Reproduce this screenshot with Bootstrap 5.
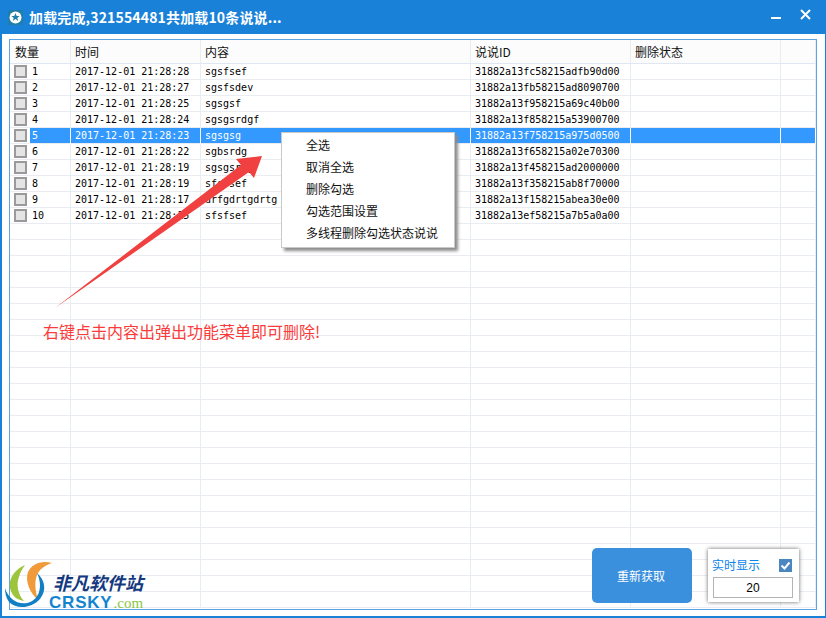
<!DOCTYPE html>
<html lang="zh-CN">
  <head>
    <meta charset="UTF-8" />
    <title>说说管理</title>
    <link
      rel="stylesheet"
      href="https://cdn.jsdelivr.net/npm/bootstrap@5.3.0/dist/css/bootstrap.min.css"
    />
    <style>
      html,
      body {
        height: 618px;
        overflow: hidden;
        background: #fff;
      }

      body {
        font-family: "Noto Sans CJK SC", sans-serif;
        font-size: 12px;
        color: #111;
      }

      .app-window {
        width: 826px;
        height: 618px;
        border: 1px solid #1a81d9;
        border-width: 0 1px 2px 2px;
      }

      .title-bar {
        height: 34px;
        margin-left: -2px;
        margin-right: -1px;
        padding-left: 8px;
        background: #1a81d9;
        color: #fff;
      }

      .title-text {
        margin-left: 6px;
        font-size: 14px;
        font-weight: 700;
        letter-spacing: 0.15px;
        line-height: 34px;
      }

      .win-min {
        position: absolute;
        left: 771px;
        top: 17px;
        width: 10px;
        height: 2px;
        background: #fff;
      }

      .win-close {
        position: absolute;
        left: 800px;
        top: 9px;
      }

      .app-body {
        padding: 5px 8px 6px 7px;
      }

      .grid-box {
        height: 571px;
        border: 1px solid #5ba5e6;
        overflow: hidden;
      }

      .data-grid {
        width: 806px;
        table-layout: fixed;
        border-collapse: separate;
        border-spacing: 0;
      }

      .data-grid th {
        height: 24px;
        padding: 0 0 0 5px;
        font-weight: 400;
        background: #fcfcfc;
        border-right: 1px solid #e9edf2;
        border-bottom: 1px solid #dfe8f2;
      }

      .data-grid th + th {
        padding-left: 4px;
      }

      .data-grid td {
        height: 16px;
        padding: 0 0 0 4px;
        line-height: 15px;
        font-family: "DejaVu Sans Mono", monospace;
        font-size: 10px;
        color: #000;
        white-space: nowrap;
        border-right: 1px solid #e9edf2;
        border-bottom: 1px solid #e9edf2;
      }

      .data-grid td.num-cell {
        padding: 0;
      }

      .num-wrap {
        height: 15px;
      }

      .num-value {
        padding-left: 2px;
      }

      .row-check {
        width: 13px;
        height: 13px;
        margin: 1px 3px 0 4px;
        border: 2px solid #9a9a9a;
        background: #e4e4e4;
        flex: none;
      }

      .data-grid tr.row-picked td {
        color: #fff;
        background: #3399ff;
        border-right-color: #fff;
        border-bottom-color: #e9edf2;
      }

      .data-grid tr.row-picked td.num-cell {
        background: #fff;
      }

      .row-picked .num-value {
        color: #fff;
        background: #3399ff;
      }

      .arrow-layer {
        position: absolute;
        left: 0;
        top: 0;
        pointer-events: none;
      }

      .note-text {
        position: absolute;
        left: 43px;
        top: 320px;
        font-size: 16px;
        line-height: 22px;
        color: #fb3a3a;
      }

      .ctx-menu {
        position: absolute;
        left: 281px;
        top: 132px;
        width: 174px;
        height: 116px;
        padding-top: 1px;
        background: #fff;
        border: 1px solid #c8c8c8;
        box-shadow: 3px 3px 3px #8c8c8c;
      }

      .ctx-item {
        height: 22px;
        padding-left: 24px;
        line-height: 22px;
      }

      .reload-btn {
        position: absolute;
        left: 592px;
        top: 548px;
        width: 100px;
        height: 55px;
        padding: 0 2px 0 0;
        font-size: 12px;
        border-radius: 5px;
        border: 0;
        background: #3a90dc;
        color: #fff;
      }

      .live-box {
        position: absolute;
        left: 708px;
        top: 549px;
        width: 91px;
        height: 53px;
        padding: 5px 5px 0 4px;
        background: #fff;
        box-shadow: 0 0 4px #666;
      }

      .live-label {
        color: #0a84e8;
        line-height: 22px;
      }

      .live-check {
        width: 13px;
        height: 13px;
        margin-right: 2px;
        background: #4a86c0;
      }

      .live-input {
        height: 21px;
        margin: 1px 1px 0 1px;
        border: 1px solid #b4b4b4;
        font-family: "Liberation Sans", sans-serif;
        line-height: 20px;
        text-align: center;
        color: #000;
      }

      .site-logo {
        position: absolute;
        left: 5px;
        top: 560px;
        width: 145px;
        height: 52px;
      }

      .site-name {
        position: absolute;
        left: 48px;
        top: 10px;
        font-size: 18px;
        line-height: 24px;
        font-weight: 700;
        font-style: italic;
        color: #14397e;
        white-space: nowrap;
      }

      .site-domain {
        position: absolute;
        left: 44px;
        top: 33px;
        line-height: 20px;
        white-space: nowrap;
        font-family: "Liberation Sans", sans-serif;
        font-size: 17px;
        font-weight: 700;
        letter-spacing: 0.8px;
        color: #1284cf;
      }

      .site-domain span {
        margin-left: 1px;
        font-family: "Liberation Serif", serif;
        font-size: 15px;
        font-weight: 400;
        letter-spacing: 0;
        color: #8cc63f;
      }
    </style>
  </head>
  <body class="position-relative">
    <div class="app-window d-flex flex-column">
      <div class="title-bar d-flex align-items-center">
        <svg width="15" height="15" viewBox="0 0 15 15">
          <rect width="15" height="15" rx="2" fill="#1f7fa8" />
          <circle cx="7.5" cy="7.5" r="6" fill="#fff" />
          <path d="M7.5 3l1.2 3h3l-2.4 1.9.9 3-2.7-1.8-2.7 1.8.9-3L3.3 6h3z" fill="#1f7fa8" />
        </svg>
        <span class="title-text">加载完成,321554481共加载10条说说...</span>
      </div>
      <span class="win-min"></span>
      <svg class="win-close" width="11" height="11" viewBox="0 0 11 11">
        <path d="M1 1l9 9M10 1l-9 9" stroke="#fff" stroke-width="2" />
      </svg>

      <div class="app-body flex-grow-1">
        <div class="grid-box">
          <table class="data-grid">
            <colgroup>
              <col style="width: 61px" />
              <col style="width: 130px" />
              <col style="width: 270px" />
              <col style="width: 160px" />
              <col style="width: 150px" />
              <col style="width: 35px" />
            </colgroup>
            <thead>
              <tr>
                <th>数量</th>
                <th>时间</th>
                <th>内容</th>
                <th>说说ID</th>
                <th>删除状态</th>
                <th></th>
              </tr>
            </thead>
            <tbody id="grid-body"></tbody>
          </table>
        </div>
      </div>
    </div>

    <svg class="arrow-layer" width="826" height="618" viewBox="0 0 826 618">
      <polygon
        points="55,308 241,165 236,159 262,156 254,178 249,172"
        fill="#f0403f"
      />
    </svg>

    <div class="note-text">右键点击内容出弹出功能菜单即可删除!</div>

    <div class="ctx-menu">
      <div class="ctx-item">全选</div>
      <div class="ctx-item">取消全选</div>
      <div class="ctx-item">删除勾选</div>
      <div class="ctx-item">勾选范围设置</div>
      <div class="ctx-item">多线程删除勾选状态说说</div>
    </div>

    <button class="btn reload-btn">重新获取</button>

    <div class="live-box">
      <div class="d-flex justify-content-between align-items-center">
        <span class="live-label">实时显示</span>
        <svg class="live-check" viewBox="0 0 13 13">
          <path d="M2.5 6.5l3 3 5-6" fill="none" stroke="#fff" stroke-width="2" />
        </svg>
      </div>
      <div class="live-input">20</div>
    </div>

    <div class="site-logo">
      <svg width="50" height="52" viewBox="0 0 50 52">
        <path d="M20 5C8 10 2 22 6 31c2 6 7 9 13 10-6-6-8-17-5-24 1-5 4-9 6-12z" fill="#9cc43c" />
        <path d="M47 3C36 0 27 4 23 12c-3 8 1 20 10 28-3-10-4-20 0-27 3-5 8-8 14-10z" fill="#f09a3a" />
        <path d="M32 13c8 7 10 17 3 26-8 9-23 11-31 3-3-4-4-9-4-14 3 10 12 17 22 15 11-2 17-15 10-30z" fill="#127fc4" />
      </svg>
      <div class="site-name">非凡软件站</div>
      <div class="site-domain">CRSKY<span>.com</span></div>
    </div>

    <script>
      // row data as shown in the grid
      const records = [
        ["2017-12-01 21:28:28", "sgsfsef", "31882a13fc58215adfb90d00"],
        ["2017-12-01 21:28:27", "sgsfsdev", "31882a13fb58215ad8090700"],
        ["2017-12-01 21:28:25", "sgsgsf", "31882a13f958215a69c40b00"],
        ["2017-12-01 21:28:24", "sgsgsrdgf", "31882a13f858215a53900700"],
        ["2017-12-01 21:28:23", "sgsgsg", "31882a13f758215a975d0500"],
        ["2017-12-01 21:28:22", "sgbsrdg", "31882a13f658215a02e70300"],
        ["2017-12-01 21:28:19", "sgsgsrdg", "31882a13f458215ad2000000"],
        ["2017-12-01 21:28:19", "sfsfsef", "31882a13f358215ab8f70000"],
        ["2017-12-01 21:28:17", "drfgdrtgdrtg", "31882a13f158215abea30e00"],
        ["2017-12-01 21:28:15", "sfsfsef", "31882a13ef58215a7b5a0a00"],
      ];

      const tbody = document.getElementById("grid-body");
      for (let i = 0; i < 34; i++) {
        const row = document.createElement("tr");
        const rec = records[i];
        if (rec) {
          if (i === 4) row.className = "row-picked";
          row.innerHTML = `
            <td class="num-cell"><div class="num-wrap d-flex"><span class="row-check"></span><span class="num-value flex-grow-1">${i + 1}</span></div></td>
            <td>${rec[0]}</td>
            <td>${rec[1]}</td>
            <td>${rec[2]}</td>
            <td></td>
            <td></td>
          `;
        } else {
          row.innerHTML = "<td></td><td></td><td></td><td></td><td></td><td></td>";
        }
        tbody.appendChild(row);
      }
    </script>

    <script src="https://cdn.jsdelivr.net/npm/bootstrap@5.3.0/dist/js/bootstrap.bundle.min.js"></script>
  </body>
</html>
